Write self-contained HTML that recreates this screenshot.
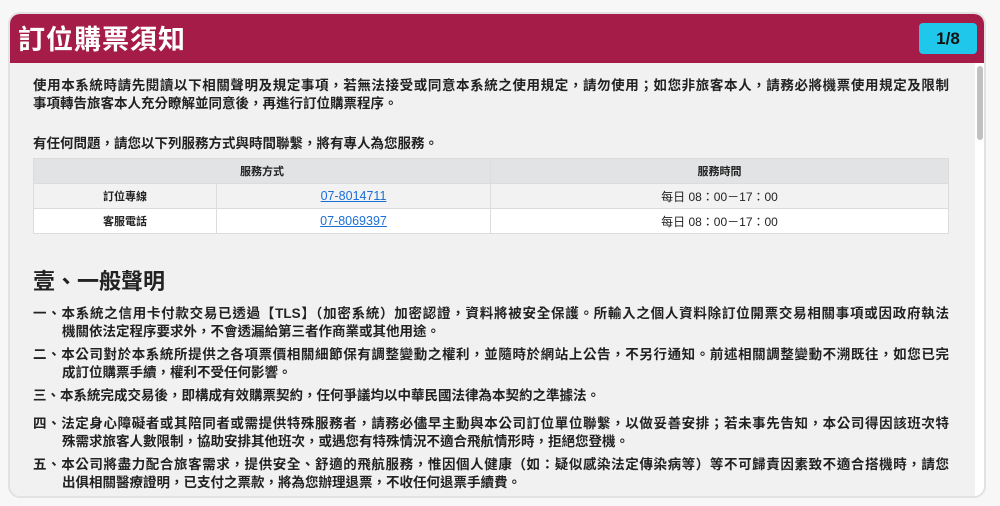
<!DOCTYPE html>
<html><head><meta charset="utf-8"><style>
*{margin:0;padding:0;box-sizing:border-box}
body{width:1000px;height:506px;background:#f7f7f7;font-family:"Liberation Sans","Noto Sans CJK TC",sans-serif;color:#222;overflow:hidden;position:relative}
.card{position:absolute;left:8px;top:12px;width:978px;height:486px;border:2px solid #e2e2e2;border-radius:12px;background:#f1f1f1;overflow:hidden}
.hd{position:absolute;left:0;top:0;right:0;height:49px;background:#a51c48}
.hd h1{position:absolute;left:8px;top:4px;font-size:27px;color:#fff;font-weight:bold;letter-spacing:1px}
.badge{position:absolute;left:909px;top:9px;width:58px;height:31px;background:#1fc7ea;border-radius:4px;font-size:17px;font-weight:bold;color:#111;text-align:center;line-height:31px;font-family:"Liberation Sans",sans-serif}
.track{position:absolute;left:965px;top:49px;width:11px;bottom:0;background:#fff}
.thumb{position:absolute;left:967px;top:52px;width:6px;height:74px;background:#c1c1c1;border-radius:3px}
.t{position:absolute;left:23px;font-size:13.5px;font-weight:bold;white-space:nowrap;line-height:18px}
.j{width:916px;text-align:justify;text-align-last:justify}
table{position:absolute;left:23px;top:144px;width:916px;border-collapse:collapse;font-size:11px;font-weight:normal}
td,th{height:25px;text-align:center;border:1px solid #dcdcdc}
th{background:#e2e3e5;font-weight:bold}
tr.a td{background:#f2f2f2}tr.b td{background:#fff}
td.k{font-weight:bold}
td.n{font-size:12px}
a{color:#1a6fd6;text-decoration:underline;font-size:12.5px}
h2{position:absolute;left:23px;top:250px;font-size:22px;font-weight:bold}
</style></head><body>
<div class="card">
<div class="hd"><h1>訂位購票須知</h1><div class="badge">1/8</div></div>
<div class="track"></div><div class="thumb"></div>
<div class="t j" style="top:63px">使用本系統時請先閱讀以下相關聲明及規定事項，若無法接受或同意本系統之使用規定，請勿使用；如您非旅客本人，請務必將機票使用規定及限制</div>
<div class="t" style="top:81px">事項轉告旅客本人充分瞭解並同意後，再進行訂位購票程序。</div>
<div class="t" style="top:121px">有任何問題，請您以下列服務方式與時間聯繫，將有專人為您服務。</div>
<table>
<tr><th colspan="2">服務方式</th><th>服務時間</th></tr>
<tr class="a"><td class="k" style="width:183px">訂位專線</td><td style="width:274px"><a>07-8014711</a></td><td class="n">每日 08：00－17：00</td></tr>
<tr class="b"><td class="k">客服電話</td><td><a>07-8069397</a></td><td class="n">每日 08：00－17：00</td></tr>
</table>
<h2>壹、一般聲明</h2>
<div class="t j" style="top:291px">一、本系統之信用卡付款交易已透過【TLS】（加密系統）加密認證，資料將被安全保護。所輸入之個人資料除訂位開票交易相關事項或因政府執法</div>
<div class="t" style="top:309px;left:52px">機關依法定程序要求外，不會透漏給第三者作商業或其他用途。</div>
<div class="t j" style="top:332px">二、本公司對於本系統所提供之各項票價相關細節保有調整變動之權利，並隨時於網站上公告，不另行通知。前述相關調整變動不溯既往，如您已完</div>
<div class="t" style="top:350px;left:52px">成訂位購票手續，權利不受任何影響。</div>
<div class="t" style="top:373px">三、本系統完成交易後，即構成有效購票契約，任何爭議均以中華民國法律為本契約之準據法。</div>
<div class="t j" style="top:401px">四、法定身心障礙者或其陪同者或需提供特殊服務者，請務必儘早主動與本公司訂位單位聯繫，以做妥善安排；若未事先告知，本公司得因該班次特</div>
<div class="t" style="top:419px;left:52px">殊需求旅客人數限制，協助安排其他班次，或遇您有特殊情況不適合飛航情形時，拒絕您登機。</div>
<div class="t j" style="top:442px">五、本公司將盡力配合旅客需求，提供安全、舒適的飛航服務，惟因個人健康（如：疑似感染法定傳染病等）等不可歸責因素致不適合搭機時，請您</div>
<div class="t" style="top:460px;left:52px">出俱相關醫療證明，已支付之票款，將為您辦理退票，不收任何退票手續費。</div>
</div>
</body></html>
